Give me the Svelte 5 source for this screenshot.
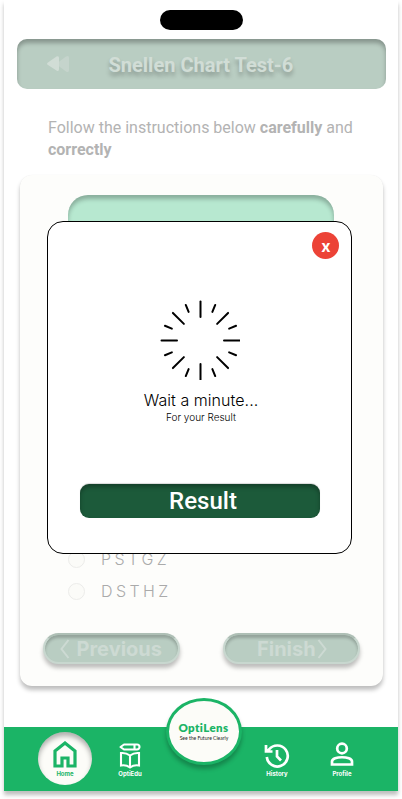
<script>
  const options = ['P S T G Z', 'D S T H Z'];
  const spokes = Array.from({ length: 16 }, (_, i) => ({ angle: i * 22.5, long: i % 2 === 0 }));
</script>

<main class="phone">
  <div class="island"></div>
  <header class="titlebar">
    <svg class="back" width="24" height="20" viewBox="0 0 24 20">
      <path d="M12 8.6 20 2.6Q23 1 23 4V16Q23 19 20 17.4L12 11.4Q10.500 10 12 8.600Z" fill="#c5d4cc" />
      <path d="M1.600 8.800 10.500 2.600Q13 1.200 13 4V15Q13 18 10.500 16.500L1.600 10.800Q.4 9.800 1.600 8.800Z" fill="#d1ddd6" />
    </svg>
    <h1>Snellen Chart Test-6</h1>
  </header>

  <p class="intro">Follow the instructions below <b>carefully</b> and <b>correctly</b></p>

  <section class="card">
    <div class="chart"></div>
    <div class="options">
      {#each options as option}
        <div class="option"><i></i><span>{option}</span></div>
      {/each}
    </div>
    <div class="actions">
      <button class="pill previous">
        <svg width="10" height="20" viewBox="0 0 10 20"><path d="M8.500 1 1.500 10l7 9" /></svg>
        <span>Previous</span>
      </button>
      <button class="pill finish">
        <span>Finish</span>
        <svg width="10" height="20" viewBox="0 0 10 20"><path d="M1.500 1 8.500 10l-7 9" /></svg>
      </button>
    </div>
  </section>

  <nav>
    <div class="tab home">
      <svg width="24" height="27" viewBox="0 0 24 27" fill="none" stroke="#1bb466" stroke-width="3.200">
        <path d="M2 25V10L12 2l10 8v15h-7v-8H9v8Z" />
      </svg>
      <span>Home</span>
    </div>
    <div class="tab edu">
      <svg width="22" height="26" viewBox="0 0 22 26" fill="none" stroke="#fff" stroke-width="2.100">
        <path d="M5 1.500H18A2.500 2.500 0 0 1 18 6.500H5L1.500 4ZM15.500 1.500V6.500" stroke-linejoin="round" />
        <path d="M11 12.500Q7 9.500 2 10V22.500Q7 21.500 11 24.500Q15 21.500 20 22.500V10Q15 9.500 11 12.500V24" />
      </svg>
      <span>OptiEdu</span>
    </div>
    <div class="tab history">
      <svg width="26" height="26" viewBox="0 0 26 26" fill="none" stroke="#fff" stroke-width="2.700">
        <path d="M2.800 14A10.500 10.500 0 1 0 5 6.500L2.500 8.500M2 2V8.500H8.500M13 7V13.500L17 17.500" />
      </svg>
      <span>History</span>
    </div>
    <div class="tab profile">
      <svg width="24" height="25" viewBox="0 0 24 25" fill="none" stroke="#fff" stroke-width="2.700">
        <circle cx="12" cy="6.500" r="4.800" />
        <path d="M2 22.500V19.500C2 13.800 22 13.800 22 19.500V22.500Z" />
      </svg>
      <span>Profile</span>
    </div>
  </nav>

  <div class="logo"><strong>OptiLens</strong><small>See the Future Clearly</small></div>

  <div class="modal" role="dialog" aria-label="Wait a minute">
    <button class="close">x</button>
    <svg class="spinner" width="80" height="80" viewBox="-40.5 -40.5 80 80">
      {#each spokes as s}
        <line x1="0" x2="0" y1={s.long ? -39 : -38.500} y2={s.long ? -23.500 : -31} transform={`rotate(${s.angle})`} />
      {/each}
    </svg>
    <h2>Wait a minute...</h2>
    <p>For your Result</p>
    <button class="result">Result</button>
  </div>
</main>

<style>
  :global(body) { margin: 0; background: #fff; }
  * { box-sizing: border-box; }
  button { border: 0; padding: 0; margin: 0; }
  h1, h2, p { margin: 0; }
  svg { display: block; flex: none; }

  .phone {
    position: relative; width: 394px; height: 791px; margin-left: 4px; padding-top: 10px;
    display: flex; flex-direction: column; background: #fff;
    font-family: Roboto, sans-serif; box-shadow: 0 4px 4px rgba(0, 0, 0, .25);
  }
  :global(#app) { height: 799px; overflow: hidden; }
  .island { width: 83px; height: 20px; margin-left: 156px; border-radius: 10px; background: #000; flex: none; }
  .titlebar {
    display: flex; align-items: center; width: 369px; height: 50px; margin: 9px 0 0 13px;
    border-radius: 10px; background: #b9cdc2; box-shadow: inset 0 4px 4px rgba(0, 0, 0, .27); flex: none;
  }
  .back { margin-left: 29px; }
  h1 {
    margin: 2px 0 0 38.500px; font-size: 20px; line-height: 24px; font-weight: 700; white-space: nowrap;
    color: #d1ddd6; text-shadow: 0 4px 4px rgba(0, 0, 0, .25);
  }
  .intro { width: 320px; margin: 28px 0 0 44px; font-size: 16px; line-height: 22px; color: #b3b3b3; }
  .card {
    width: 363px; height: 511px; margin: 14px 0 0 16px; border-radius: 12px; flex: none;
    display: flex; flex-direction: column; background: #fdfdfb;
    box-shadow: 0 4px 4px rgba(0, 0, 0, .25), 0 0 1px rgba(0, 0, 0, .08);
  }
  .chart {
    width: 266px; height: 150px; margin: 20px 0 0 48px; border-radius: 20px; flex: none;
    background: #b7e8d0; box-shadow: inset 0 4px 4px rgba(0, 0, 0, .25);
  }
  .options { display: flex; flex-direction: column; gap: 14px; margin: 205px 0 0 48px; }
  .option { display: flex; align-items: center; height: 18px; gap: 16px; }
  .option i { width: 17px; height: 17px; border: 1px solid #ececea; border-radius: 50%; background: #fbfbf8; }
  .option span { font: 300 16px/18px Inter, sans-serif; letter-spacing: -.55px; color: #aaa; }
  .actions { display: flex; justify-content: space-between; width: 317px; margin: 33px 0 0 22.500px; }
  .pill {
    display: flex; align-items: center; width: 137px; height: 31px; border-radius: 16px;
    border: 2px solid #c8d7cf; border-top-color: #aebfb5; background: #b9cdc2; color: #cddad3;
    font: 700 20px/24px Inter, sans-serif;
    box-shadow: 0 4px 4px rgba(0, 0, 0, .25), inset 0 3px 3px rgba(0, 0, 0, .2);
  }
  .pill path { fill: none; stroke: #cddad3; stroke-width: 2; }
  .previous { padding-left: 15px; gap: 7px; }
  .finish { padding-left: 32.500px; gap: 1px; }

  nav {
    display: flex; width: 394px; height: 64px; margin-top: auto; flex: none; background: #1bb466;
  }
  .tab { display: flex; flex-direction: column; align-items: center; color: #fff; width: 54px; }
  .tab span { font: 700 6px/8px Inter, sans-serif; white-space: nowrap; }
  .home {
    height: 53px; margin: 5px 0 0 34px; padding-top: 9px; border-radius: 50%; color: #1bb466;
    background: #fcfcf8; box-shadow: inset 0 4px 5px rgba(0, 0, 0, .3);
  }
  .home span { margin-top: 2px; }
  .edu { margin-left: 11px; padding-top: 16px; }
  .edu span { margin-top: 1px; }
  .history { margin-left: 93px; padding-top: 16px; }
  .history span { margin-top: 1px; }
  .profile { margin-left: 11px; padding-top: 15px; }
  .profile span { margin-top: 3px; }

  .logo {
    position: absolute; left: 162px; top: 698px; width: 76px; height: 67px; border: 3px solid #1bb466;
    border-radius: 50%; display: flex; flex-direction: column; align-items: center; padding-top: 20px;
    background: #fcfcf8; box-shadow: 0 4px 4px rgba(0, 0, 0, .25);
  }
  .logo strong { font: 800 11.500px/14px Lato, sans-serif; letter-spacing: .4px; margin-right: 1px; color: #1bb466; }
  .logo small { font: 400 5px/7px Lato, sans-serif; color: #222; white-space: nowrap; }

  .modal {
    position: absolute; left: 43px; top: 221px; width: 305px; height: 333px; border: 1px solid #000;
    border-radius: 16px; background: #fff; display: flex; flex-direction: column; align-items: center;
  }
  .close {
    align-self: flex-end; width: 27px; height: 27px; margin: 10px 12px 0 0; padding-left: 1px; border-radius: 50%;
    background: #ec4337; color: #fff; font: 700 16px/24px Inter, sans-serif;
  }
  .spinner { margin: 41px 0 0 1px; }
  .spinner line { stroke: #000; stroke-width: 2; stroke-linecap: round; }
  h2 { margin: 10px 0 0 3px; font: 300 16px/20px Inter, sans-serif; color: #000; letter-spacing: .05px; }
  .modal p { margin: 1px 0 0 3px; font: 300 10px/13px Inter, sans-serif; color: #000; }
  .result {
    width: 240px; height: 34px; margin: 60px 0 0 1px; padding-left: 6px; border-radius: 9px; background: #1c5a3a; color: #fff;
    font: 500 24px/34px Roboto, sans-serif;
    box-shadow: inset 0 3px 4px rgba(0, 0, 0, .3), 0 -1px 1px rgba(0, 0, 0, .15);
  }
</style>
